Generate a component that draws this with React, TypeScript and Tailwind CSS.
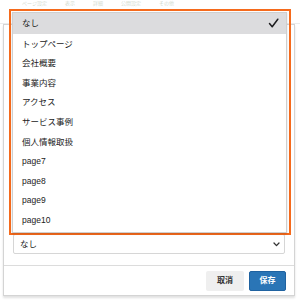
import { FC } from 'react';

const options = [
  'なし',
  'トップページ',
  '会社概要',
  '事業内容',
  'アクセス',
  'サービス事例',
  '個人情報取扱',
  'page7',
  'page8',
  'page9',
  'page10',
];

const Check: FC = () => (
  <svg width="11" height="11" viewBox="0 0 11 11" className="block">
    <path d="M1.5 5.5 L4.2 8.8 L9.8 1.2" fill="none" stroke="#1d1d1f" strokeWidth="1.5" strokeLinecap="round" strokeLinejoin="round" />
  </svg>
);

const Chevron: FC = () => (
  <svg width="7" height="5" viewBox="0 0 7 5" className="block">
    <path d="M1 1 L3.5 3.6 L6 1" fill="none" stroke="#333" strokeWidth="1.3" strokeLinecap="round" strokeLinejoin="round" />
  </svg>
);

export default function App() {
  return (
    <div className="relative w-[300px] h-[301px] overflow-hidden bg-white font-['Liberation_Sans','Noto_Sans_CJK_JP',sans-serif] text-[#222]">
      {/* modal header, mostly under the dropdown */}
      <div className="h-[24px] border-b border-[#ececec]">
        <div className="pl-[22px] flex gap-[18px] text-[5px] leading-[6px] text-[#d3dbcf]">
          <span>ページ設定</span>
          <span>表示</span>
          <span>詳細</span>
          <span>公開設定</span>
          <span>その他</span>
        </div>
      </div>

      {/* modal panel */}
      <div className="ml-[3px] w-[292px] h-[272px] border border-[#d4d4d4] shadow-[0_2px_2px_rgba(0,0,0,0.12)] flex flex-col bg-white">
        <div className="flex-1 flex flex-col justify-end px-[9px] pb-[11px]">
          <div className="h-[20px] border border-[#d6d6d6] rounded-[2px] flex items-center justify-between pl-[6px] pr-[4px] text-[8.5px] leading-none">
            <span>なし</span>
            <Chevron />
          </div>
        </div>
        <div className="border-t border-[#dcdcdc] pt-[5px] pb-[4px] pr-[8px] flex justify-end gap-[5px]">
          <button className="h-[20px] w-[38px] rounded-[2px] bg-[#efefef] text-[8px] font-bold text-[#333] leading-none">
            取消
          </button>
          <button className="h-[20px] w-[37px] rounded-[2px] bg-[#2a75b6] border border-[#1f62a0] text-[8px] font-bold text-white leading-none">
            保存
          </button>
        </div>
      </div>

      {/* open dropdown with highlight */}
      <div className="absolute left-[9px] top-[9px] w-[282px] h-[226px] border-2 border-[#f56a1c] pl-[1px] pt-[1px] pr-[2px]">
        <ul className="bg-white border border-[#cfcfcf] shadow-[0_1px_2px_rgba(0,0,0,0.15)] pb-[2px]">
          {options.map((o, i) => (
            <li
              key={o}
              className={
                i === 0
                  ? 'h-[21px] bg-[#dcdcde] flex items-center justify-between pl-[9px] pr-[7px] text-[8.5px] leading-none'
                  : 'h-[19.6px] flex items-center pl-[9px] text-[8.5px] leading-none'
              }
            >
              <span>{o}</span>
              {i === 0 && <Check />}
            </li>
          ))}
        </ul>
      </div>
    </div>
  );
}
